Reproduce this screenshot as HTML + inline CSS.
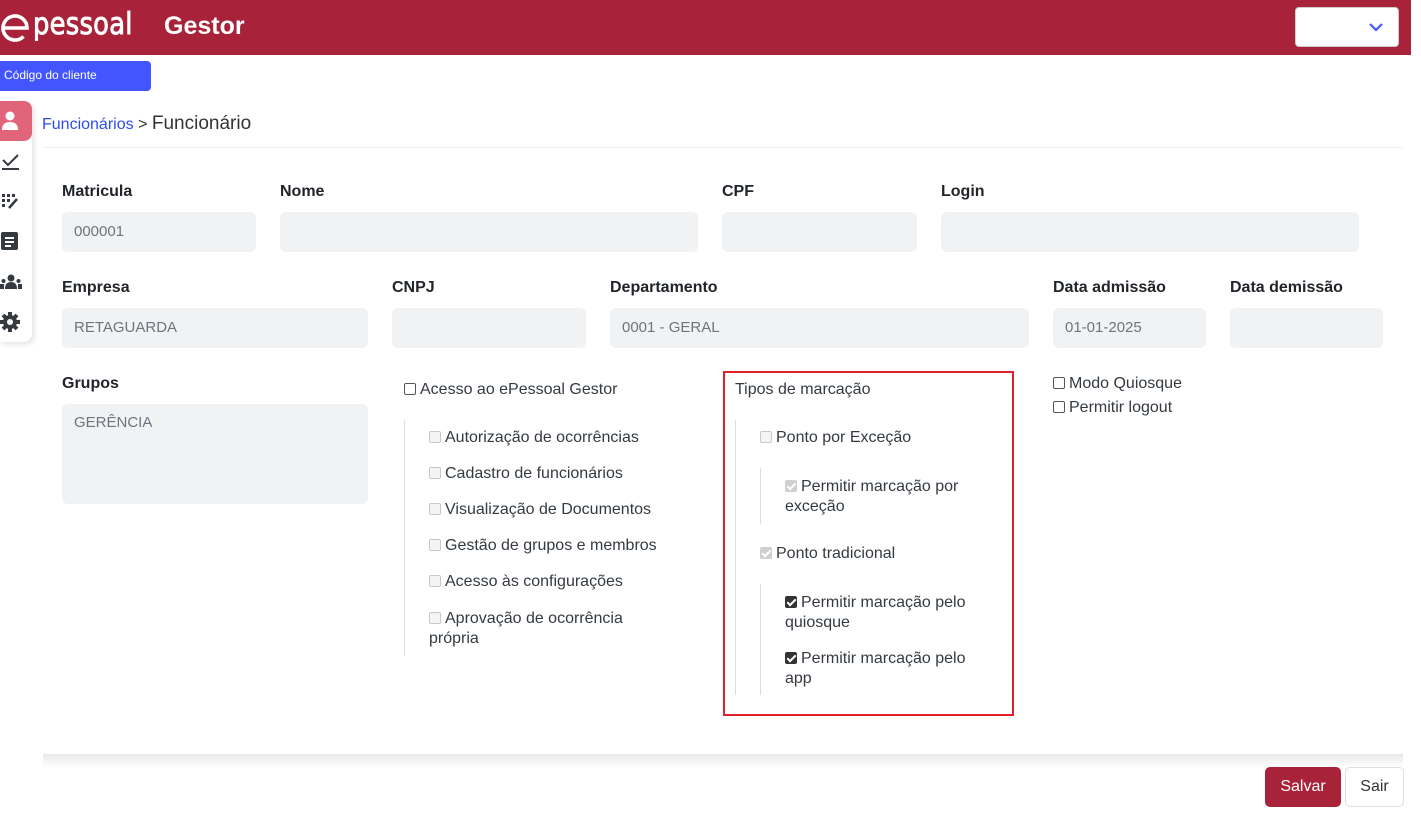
<!DOCTYPE html>
<html><head><meta charset="utf-8"><style>
*{box-sizing:border-box;margin:0;padding:0}
body{width:1421px;height:829px;position:relative;overflow:hidden;background:#fff;font-family:"Liberation Sans","DejaVu Sans",sans-serif;font-size:16px;color:#343a40}
.a{position:absolute}
.hdr{left:0;top:0;width:1411px;height:55px;background:#a8233a}
.lbl{font-weight:bold;color:#212529;font-size:16px}
.in{background:#f1f2f4;border-radius:6px;color:#6c757d;padding:0 12px;line-height:40px;height:40px;font-size:15px}
.cb{display:inline-block;width:12px;height:12px;border:1px solid #555;border-radius:2px;vertical-align:-1px;margin-right:4px;background:#fff;position:relative}
.cb.d{border-color:#c8c8c8;background:#f4f4f4}
.cb.dc{border-color:#d0d0d0;background:#d0d0d0}
.cb.c{background:#333;border-color:#333}
.cb.c::after,.cb.dc::after{content:"";position:absolute;left:3px;top:0px;width:3px;height:7px;border:solid #fff;border-width:0 2px 2px 0;transform:rotate(45deg)}
.t{font-size:16px;color:#343a40;white-space:nowrap}
.vl{width:1px;background:#ddd}
</style></head><body>
<div class="a hdr"></div>
<svg class="a" style="left:0;top:13px" width="32" height="30" viewBox="0 0 32 30"><path d="M3 15 H27 A12 12 0 1 0 23.5 23.5" stroke="#fff" stroke-width="3.6" fill="none"/></svg>
<div class="a" style="left:33px;top:7px;color:#fff;font-size:30px;font-weight:normal;-webkit-text-stroke:0.9px #fff;letter-spacing:0.3px;font-family:'DejaVu Sans',sans-serif;transform:scaleX(0.86);transform-origin:left">pessoal</div>
<div class="a" style="left:164px;top:12px;color:#fff;font-size:25px;font-weight:bold">Gestor</div>
<div class="a" style="left:1295px;top:7px;width:104px;height:40px;background:#fff;border:1px solid #ccc;border-radius:4px"></div>
<svg class="a" style="left:1369px;top:22px" width="14" height="10"><path d="M1 2 L7 8 L13 2" stroke="#4057ff" stroke-width="2.2" fill="none"/></svg>
<div class="a" style="left:0;top:61px;width:151px;height:30px;background:#4255ff;border-radius:0 4px 4px 0;color:#fff;font-size:12px;line-height:29px;padding-left:4px">Código do cliente</div>
<div class="a" style="left:0;top:101px;width:32px;height:241px;background:#fff;border-radius:0 8px 8px 0;box-shadow:2px 2px 6px rgba(0,0,0,.12)"></div>
<div class="a" style="left:0;top:101px;width:32px;height:40px;background:#e0657a;border-radius:0 8px 8px 0"></div>
<svg class="a" style="left:2px;top:111px" width="16" height="20"><circle cx="8" cy="5" r="4.5" fill="#fff"/><path d="M0 19 Q0 11 8 11 Q16 11 16 19Z" fill="#fff"/></svg>
<svg class="a" style="left:2px;top:152px" width="18" height="18"><path d="M1 8 L6 13 L16 3" stroke="#343a40" stroke-width="2" fill="none"/><rect x="0" y="16" width="17" height="2" fill="#343a40"/></svg>
<svg class="a" style="left:2px;top:193px" width="18" height="18"><g fill="#343a40"><rect x="0" y="1" width="3" height="3"/><rect x="5" y="1" width="3" height="3"/><rect x="10" y="1" width="3" height="3"/><rect x="0" y="6" width="3" height="3"/><rect x="5" y="6" width="3" height="3"/><rect x="0" y="11" width="3" height="3"/></g><path d="M7 15 L15 6" stroke="#343a40" stroke-width="2.5"/></svg>
<svg class="a" style="left:1px;top:232px" width="18" height="20"><rect x="0" y="0" width="17" height="18" rx="2" fill="#343a40"/><g fill="#fff"><rect x="4" y="5" width="9" height="2"/><rect x="4" y="9" width="9" height="2"/><rect x="4" y="13" width="6" height="2"/></g></svg>
<svg class="a" style="left:0;top:274px" width="22" height="16"><g fill="#343a40"><circle cx="11" cy="4" r="3.5"/><path d="M5 15 Q5 8 11 8 Q17 8 17 15Z"/><circle cx="3.5" cy="7" r="2"/><circle cx="18.5" cy="7" r="2"/><rect x="0" y="10" width="4" height="5"/><rect x="18" y="10" width="4" height="5"/></g></svg>
<svg class="a" style="left:0;top:312px" width="20" height="20" viewBox="0 0 20 20"><g fill="#343a40"><circle cx="10" cy="10" r="7"/><g stroke="#343a40" stroke-width="4"><path d="M10 0V20M0 10H20M3 3L17 17M17 3L3 17"/></g></g><circle cx="10" cy="10" r="3" fill="#fff"/></svg>
<div class="a" style="left:42px;top:113px;font-size:16px"><span style="color:#2d4cf0">Funcionários</span> <span style="color:#333">&gt;</span> <span style="font-size:19px;color:#333">Funcionário</span></div>
<div class="a" style="left:43px;top:147px;width:1360px;height:1px;background:#eee"></div>

<div class="a lbl" style="left:62px;top:183px">Matricula</div>
<div class="a in" style="left:62px;top:212px;width:194px">000001</div>
<div class="a lbl" style="left:280px;top:183px">Nome</div>
<div class="a in" style="left:280px;top:212px;width:418px"></div>
<div class="a lbl" style="left:722px;top:183px">CPF</div>
<div class="a in" style="left:722px;top:212px;width:195px"></div>
<div class="a lbl" style="left:941px;top:183px">Login</div>
<div class="a in" style="left:941px;top:212px;width:418px"></div>

<div class="a lbl" style="left:62px;top:279px">Empresa</div>
<div class="a in" style="left:62px;top:308px;width:306px">RETAGUARDA</div>
<div class="a lbl" style="left:392px;top:279px">CNPJ</div>
<div class="a in" style="left:392px;top:308px;width:194px"></div>
<div class="a lbl" style="left:610px;top:279px">Departamento</div>
<div class="a in" style="left:610px;top:308px;width:419px">0001 - GERAL</div>
<div class="a lbl" style="left:1053px;top:279px">Data admissão</div>
<div class="a in" style="left:1053px;top:308px;width:153px">01-01-2025</div>
<div class="a lbl" style="left:1230px;top:279px">Data demissão</div>
<div class="a in" style="left:1230px;top:308px;width:153px"></div>

<div class="a lbl" style="left:62px;top:375px">Grupos</div>
<div class="a in" style="left:62px;top:404px;width:306px;height:100px;line-height:38px">GERÊNCIA</div>

<div class="a t" style="left:404px;top:381px"><span class="cb"></span>Acesso ao ePessoal Gestor</div>
<div class="a vl" style="left:404px;top:420px;height:236px"></div>
<div class="a t" style="left:429px;top:429px"><span class="cb d"></span>Autorização de ocorrências</div>
<div class="a t" style="left:429px;top:465px"><span class="cb d"></span>Cadastro de funcionários</div>
<div class="a t" style="left:429px;top:501px"><span class="cb d"></span>Visualização de Documentos</div>
<div class="a t" style="left:429px;top:537px"><span class="cb d"></span>Gestão de grupos e membros</div>
<div class="a t" style="left:429px;top:573px"><span class="cb d"></span>Acesso às configurações</div>
<div class="a t" style="left:429px;top:609px;line-height:20px"><span class="cb d"></span>Aprovação de ocorrência<br>própria</div>

<div class="a" style="left:723px;top:371px;width:291px;height:345px;border:2px solid #e0202a"></div>
<div class="a t" style="left:735px;top:381px">Tipos de marcação</div>
<div class="a vl" style="left:735px;top:420px;height:275px"></div>
<div class="a t" style="left:760px;top:429px"><span class="cb d"></span>Ponto por Exceção</div>
<div class="a vl" style="left:760px;top:468px;height:56px"></div>
<div class="a t" style="left:785px;top:477px;line-height:20px"><span class="cb dc"></span>Permitir marcação por<br>exceção</div>
<div class="a t" style="left:760px;top:545px"><span class="cb dc"></span>Ponto tradicional</div>
<div class="a vl" style="left:760px;top:584px;height:111px"></div>
<div class="a t" style="left:785px;top:593px;line-height:20px"><span class="cb c"></span>Permitir marcação pelo<br>quiosque</div>
<div class="a t" style="left:785px;top:649px;line-height:20px"><span class="cb c"></span>Permitir marcação pelo<br>app</div>

<div class="a t" style="left:1053px;top:375px"><span class="cb"></span>Modo Quiosque</div>
<div class="a t" style="left:1053px;top:399px"><span class="cb"></span>Permitir logout</div>

<div class="a" style="left:43px;top:754px;width:1360px;height:14px;background:linear-gradient(#e9e9e9,#fff)"></div>
<div class="a" style="left:1265px;top:767px;width:76px;height:40px;background:#a8233a;border-radius:5px;color:#fff;text-align:center;line-height:40px">Salvar</div>
<div class="a" style="left:1345px;top:767px;width:59px;height:40px;border:1px solid #ddd;border-radius:5px;color:#333;text-align:center;line-height:38px">Sair</div>
</body></html>
